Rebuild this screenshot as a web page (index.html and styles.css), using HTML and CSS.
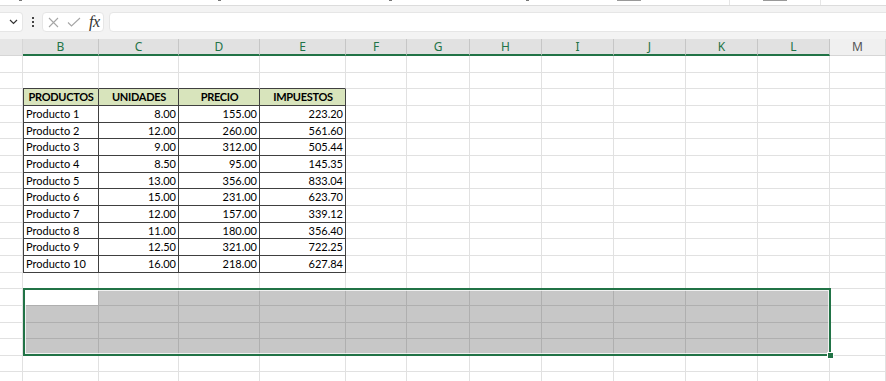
FILE: index.html
```html
<!DOCTYPE html>
<html lang="es">
<head>
    <meta charset="UTF-8">
    <title>Productos</title>
    <link rel="stylesheet" href="styles.css">
</head>
<body>

<div class="ribbon-tail">
    <span class="mark m1"></span>
    <span class="mark m2"></span>
    <span class="mark m3"></span>
    <span class="mark m4"></span>
    <span class="mark wide m5"></span>
    <span class="sep s1"></span>
    <span class="mark wide m6"></span>
    <span class="sep s2"></span>
</div>

<div class="formula-bar">
    <div class="name-box">
        <svg width="9" height="6" viewBox="0 0 9 6"><path d="M1 1l3.5 3.5L8 1" fill="none" stroke="#333" stroke-width="1.2"/></svg>
    </div>
    <div class="grip"><i></i><i></i><i></i></div>
    <div class="fn-box">
        <svg class="ic-x" width="11" height="11" viewBox="0 0 11 11"><path d="M1 1l9 9M10 1l-9 9" stroke="#a6a6a6" stroke-width="1.1"/></svg>
        <svg class="ic-ok" width="14" height="10" viewBox="0 0 14 10"><path d="M1 5.5l3.5 3.5L13 1" fill="none" stroke="#a6a6a6" stroke-width="1.1"/></svg>
        <span class="fx">fx</span>
    </div>
    <div class="formula-input"></div>
</div>

<div class="sheet">
    <div class="hd corner"></div>
    <div class="hd sel">B</div><div class="hd sel">C</div><div class="hd sel">D</div><div class="hd sel">E</div><div class="hd sel">F</div><div class="hd sel">G</div><div class="hd sel">H</div><div class="hd sel">I</div><div class="hd sel">J</div><div class="hd sel">K</div><div class="hd sel">L</div>
    <div class="hd">M</div>

    <!-- 1 -->
    <div class="c"></div><div class="c"></div><div class="c"></div><div class="c"></div><div class="c"></div><div class="c"></div><div class="c"></div><div class="c"></div><div class="c"></div><div class="c"></div><div class="c"></div><div class="c"></div><div class="c"></div>
    <!-- 2 -->
    <div class="c"></div><div class="c above"></div><div class="c above"></div><div class="c above"></div><div class="c above"></div><div class="c"></div><div class="c"></div><div class="c"></div><div class="c"></div><div class="c"></div><div class="c"></div><div class="c"></div><div class="c"></div>
    <!-- 3: table header -->
    <div class="c"></div><div class="c t th first">PRODUCTOS</div><div class="c t th">UNIDADES</div><div class="c t th">PRECIO</div><div class="c t th">IMPUESTOS</div><div class="c"></div><div class="c"></div><div class="c"></div><div class="c"></div><div class="c"></div><div class="c"></div><div class="c"></div><div class="c"></div>
    <!-- 4-13: data -->
    <div class="c"></div><div class="c t first">Producto 1</div><div class="c t n">8.00</div><div class="c t n">155.00</div><div class="c t n">223.20</div><div class="c"></div><div class="c"></div><div class="c"></div><div class="c"></div><div class="c"></div><div class="c"></div><div class="c"></div><div class="c"></div>
    <div class="c"></div><div class="c t first">Producto 2</div><div class="c t n">12.00</div><div class="c t n">260.00</div><div class="c t n">561.60</div><div class="c"></div><div class="c"></div><div class="c"></div><div class="c"></div><div class="c"></div><div class="c"></div><div class="c"></div><div class="c"></div>
    <div class="c"></div><div class="c t first">Producto 3</div><div class="c t n">9.00</div><div class="c t n">312.00</div><div class="c t n">505.44</div><div class="c"></div><div class="c"></div><div class="c"></div><div class="c"></div><div class="c"></div><div class="c"></div><div class="c"></div><div class="c"></div>
    <div class="c"></div><div class="c t first">Producto 4</div><div class="c t n">8.50</div><div class="c t n">95.00</div><div class="c t n">145.35</div><div class="c"></div><div class="c"></div><div class="c"></div><div class="c"></div><div class="c"></div><div class="c"></div><div class="c"></div><div class="c"></div>
    <div class="c"></div><div class="c t first">Producto 5</div><div class="c t n">13.00</div><div class="c t n">356.00</div><div class="c t n">833.04</div><div class="c"></div><div class="c"></div><div class="c"></div><div class="c"></div><div class="c"></div><div class="c"></div><div class="c"></div><div class="c"></div>
    <div class="c"></div><div class="c t first">Producto 6</div><div class="c t n">15.00</div><div class="c t n">231.00</div><div class="c t n">623.70</div><div class="c"></div><div class="c"></div><div class="c"></div><div class="c"></div><div class="c"></div><div class="c"></div><div class="c"></div><div class="c"></div>
    <div class="c"></div><div class="c t first">Producto 7</div><div class="c t n">12.00</div><div class="c t n">157.00</div><div class="c t n">339.12</div><div class="c"></div><div class="c"></div><div class="c"></div><div class="c"></div><div class="c"></div><div class="c"></div><div class="c"></div><div class="c"></div>
    <div class="c"></div><div class="c t first">Producto 8</div><div class="c t n">11.00</div><div class="c t n">180.00</div><div class="c t n">356.40</div><div class="c"></div><div class="c"></div><div class="c"></div><div class="c"></div><div class="c"></div><div class="c"></div><div class="c"></div><div class="c"></div>
    <div class="c"></div><div class="c t first">Producto 9</div><div class="c t n">12.50</div><div class="c t n">321.00</div><div class="c t n">722.25</div><div class="c"></div><div class="c"></div><div class="c"></div><div class="c"></div><div class="c"></div><div class="c"></div><div class="c"></div><div class="c"></div>
    <div class="c"></div><div class="c t first">Producto 10</div><div class="c t n">16.00</div><div class="c t n">218.00</div><div class="c t n">627.84</div><div class="c"></div><div class="c"></div><div class="c"></div><div class="c"></div><div class="c"></div><div class="c"></div><div class="c"></div><div class="c"></div>
    <!-- 14-20 -->
    <div class="c"></div><div class="c"></div><div class="c"></div><div class="c"></div><div class="c"></div><div class="c"></div><div class="c"></div><div class="c"></div><div class="c"></div><div class="c"></div><div class="c"></div><div class="c"></div><div class="c"></div>
    <div class="c"></div><div class="c"></div><div class="c"></div><div class="c"></div><div class="c"></div><div class="c"></div><div class="c"></div><div class="c"></div><div class="c"></div><div class="c"></div><div class="c"></div><div class="c"></div><div class="c"></div>
    <div class="c"></div><div class="c"></div><div class="c"></div><div class="c"></div><div class="c"></div><div class="c"></div><div class="c"></div><div class="c"></div><div class="c"></div><div class="c"></div><div class="c"></div><div class="c"></div><div class="c"></div>
    <div class="c"></div><div class="c"></div><div class="c"></div><div class="c"></div><div class="c"></div><div class="c"></div><div class="c"></div><div class="c"></div><div class="c"></div><div class="c"></div><div class="c"></div><div class="c"></div><div class="c"></div>
    <div class="c"></div><div class="c"></div><div class="c"></div><div class="c"></div><div class="c"></div><div class="c"></div><div class="c"></div><div class="c"></div><div class="c"></div><div class="c"></div><div class="c"></div><div class="c"></div><div class="c"></div>
    <div class="c"></div><div class="c"></div><div class="c"></div><div class="c"></div><div class="c"></div><div class="c"></div><div class="c"></div><div class="c"></div><div class="c"></div><div class="c"></div><div class="c"></div><div class="c"></div><div class="c"></div>
    <div class="c"></div><div class="c"></div><div class="c"></div><div class="c"></div><div class="c"></div><div class="c"></div><div class="c"></div><div class="c"></div><div class="c"></div><div class="c"></div><div class="c"></div><div class="c"></div><div class="c"></div>

    <!-- selected range B15:L18 -->
    <div class="selection"><span class="handle"></span></div>
    <div class="active-cell"></div>
</div>

</body>
</html>
```

FILE: styles.css
```css
html, body {
    margin: 0;
    height: 100%;
    overflow: hidden;
    background: #fff;
}
body {
    font-family: Lato, "Liberation Sans", sans-serif;
}

/* bottom edge of the ribbon, cut off by the screenshot */
.ribbon-tail {
    height: 5px;
    display: flex;
    align-items: flex-start;
    border-bottom: 1px solid #dcdcdc;
    overflow: hidden;
}
.mark {
    width: 3px;
    height: 1px;
    background: #777;
}
.mark.wide {
    width: 24px;
    background: #999;
}
.sep {
    width: 1px;
    height: 5px;
    background: #e6e6e6;
}
.m1 { margin-left: 19px; }
.m2 { margin-left: 196px; }
.m3 { margin-left: 168px; }
.m4 { margin-left: 134px; }
.m5 { margin-left: 88px; }
.s1 { margin-left: 88px; }
.m6 { margin-left: 33px; }
.s2 { margin-left: 33px; }

.formula-bar {
    height: 33px;
    box-sizing: border-box;
    padding: 6px 0 7px;
    display: flex;
    background: #f3f3f3;
}
.name-box,
.fn-box,
.formula-input {
    height: 20px;
    background: #fff;
    border: 1px solid #e6e6e6;
    box-sizing: border-box;
}
.name-box {
    width: 23px;
    border-left: none;
    border-radius: 0 4px 4px 0;
    display: flex;
    align-items: center;
    padding-left: 9px;
}
.grip {
    width: 2px;
    margin: 0 8px 0 9px;
    display: flex;
    flex-direction: column;
    justify-content: center;
    gap: 2px;
}
.grip i {
    width: 2px;
    height: 2px;
    background: #444;
}
.fn-box {
    width: 62px;
    border-radius: 4px;
    display: flex;
    align-items: center;
    padding-left: 5px;
}
.ic-ok {
    margin-left: 8px;
}
.fx {
    margin-left: 8px;
    font-family: "Liberation Serif", serif;
    font-style: italic;
    font-size: 16px;
    line-height: 16px;
    color: #333;
    letter-spacing: -0.5px;
}
.formula-input {
    flex: 1;
    margin: 0 -6px 0 5px;
    border-radius: 4px;
}

/* worksheet */
.sheet {
    position: relative;
    display: grid;
    grid-template-columns: 23px 76px 80px 81px 86px 61px 63px 72px 72px 72px 72px 72px 1fr;
    grid-template-rows: 17px;
    grid-auto-rows: 16.667px;
}
.hd {
    box-sizing: border-box;
    background: #f0f0f0;
    border-right: 1px solid #d6d6d6;
    border-bottom: 1px solid #d6d6d6;
    font-family: "Noto Sans", sans-serif;
    font-size: 12px;
    line-height: 16px;
    text-align: center;
    color: #555;
}
.hd.corner {
    background: #e6e6e6;
}
.hd.sel {
    background: #e1e1e1;
    color: #217346;
    border-right-color: #c6c6c6;
    border-bottom: 2px solid #217346;
}
.c {
    box-sizing: border-box;
    border-right: 1px solid #e1e1e1;
    border-bottom: 1px solid #e1e1e1;
    font-size: 11px;
    line-height: 16px;
    color: #000;
    padding: 0 2px 0 3px;
    white-space: nowrap;
    overflow: hidden;
}
.c.above {
    border-bottom-color: #404040;
}
.c.t {
    border-right-color: #404040;
    border-bottom-color: #404040;
}
.c.first {
    border-left: 1px solid #404040;
    padding-left: 2px;
}
.c.th {
    background: #d8e4bc;
    font-weight: bold;
    letter-spacing: -0.3px;
    text-align: center;
}
.c.n {
    text-align: right;
}

.selection {
    position: absolute;
    grid-row: 16 / 20;
    grid-column: 2 / 13;
    top: -1px;
    left: 0;
    right: -1px;
    bottom: 0;
    border: 2px solid #217346;
    background: rgba(0, 0, 0, 0.22);
    box-shadow: inset 0 0 0 1px rgba(255, 255, 255, 0.75);
}
.handle {
    position: absolute;
    right: -5px;
    bottom: -5px;
    width: 5px;
    height: 5px;
    background: #217346;
    border: 1px solid #fff;
}
.active-cell {
    position: absolute;
    grid-row: 16 / 17;
    grid-column: 2 / 3;
    top: 1px;
    left: 2px;
    right: 1px;
    bottom: 1px;
    background: #fff;
}
```
